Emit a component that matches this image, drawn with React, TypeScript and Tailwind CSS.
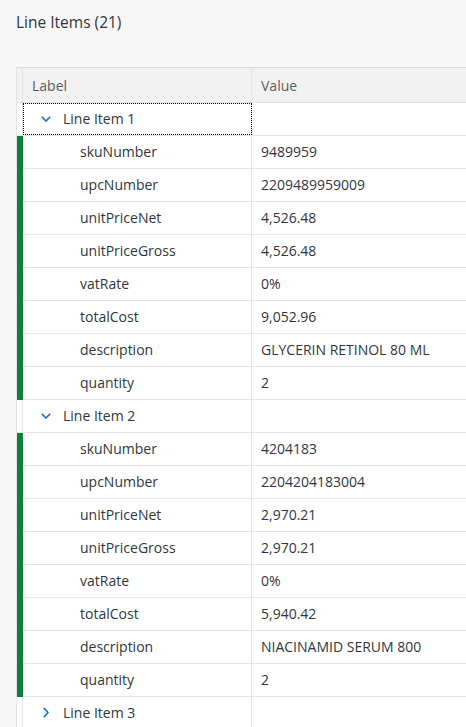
import React from "react";

type Row =
  | { kind: "group"; label: string; open: boolean; focus?: boolean }
  | { kind: "item"; label: string; value: string };

const rows: Row[] = [
  { kind: "group", label: "Line Item 1", open: true, focus: true },
  { kind: "item", label: "skuNumber", value: "9489959" },
  { kind: "item", label: "upcNumber", value: "2209489959009" },
  { kind: "item", label: "unitPriceNet", value: "4,526.48" },
  { kind: "item", label: "unitPriceGross", value: "4,526.48" },
  { kind: "item", label: "vatRate", value: "0%" },
  { kind: "item", label: "totalCost", value: "9,052.96" },
  { kind: "item", label: "description", value: "GLYCERIN RETINOL 80 ML" },
  { kind: "item", label: "quantity", value: "2" },
  { kind: "group", label: "Line Item 2", open: true },
  { kind: "item", label: "skuNumber", value: "4204183" },
  { kind: "item", label: "upcNumber", value: "2204204183004" },
  { kind: "item", label: "unitPriceNet", value: "2,970.21" },
  { kind: "item", label: "unitPriceGross", value: "2,970.21" },
  { kind: "item", label: "vatRate", value: "0%" },
  { kind: "item", label: "totalCost", value: "5,940.42" },
  { kind: "item", label: "description", value: "NIACINAMID SERUM 800" },
  { kind: "item", label: "quantity", value: "2" },
  { kind: "group", label: "Line Item 3", open: false },
];

function ChevronDown() {
  return (
    <svg width="10" height="6" viewBox="0 0 10 6" className="block">
      <path d="M0.8 0.8 L5 5 L9.2 0.8" fill="none" stroke="#0a6ed1" strokeWidth="1.6" />
    </svg>
  );
}

function ChevronRight() {
  return (
    <svg width="6" height="11" viewBox="0 0 6 11" className="block">
      <path d="M0.8 0.8 L5 5.5 L0.8 10.2" fill="none" stroke="#0a6ed1" strokeWidth="1.6" />
    </svg>
  );
}

export default function App() {
  return (
    <div
      className="w-[466px] h-[727px] overflow-hidden bg-[#f7f7f7] text-[#32363a]"
      style={{ fontFamily: '"Open Sans", "Noto Sans", sans-serif' }}
    >
      <div className="h-[67px] pl-4 pt-[10px]">
        <div className="text-[15.5px] leading-[24px]">Line Items (21)</div>
      </div>
      <div className="ml-4 w-[700px] bg-white border-t border-[#dcdcdc]">
        {/* header */}
        <div className="flex h-[35px] bg-[#f2f2f2] border-b border-[#e0e0e0]">
          <div className="w-[7px] border-l border-r border-[#e5e5e5]" />
          <div className="w-[229px] border-r border-[#e5e5e5] flex items-center pl-[9px] text-[14px] text-[#5b5e61]">
            Label
          </div>
          <div className="flex-1 flex items-center pl-[9px] text-[14px] text-[#5b5e61]">Value</div>
        </div>
        {rows.map((r, i) => (
          <div key={i} className="flex h-[33px] border-b border-[#e5e5e5] text-[14px]">
            {r.kind === "item" ? (
              <div className="w-[7px] border-l border-[#e5e5e5] bg-[#107e3e] -mb-px" />
            ) : (
              <div className="w-[7px] border-l border-r border-[#e5e5e5]" />
            )}
            <div
              className={
                "w-[229px] border-r border-[#e5e5e5] flex items-center pb-px " +
                (r.kind === "group" && r.focus ? "outline outline-1 outline-dotted outline-black -outline-offset-1 " : "") +
                (r.kind === "group" ? "pl-[18px]" : "pl-[57px]")
              }
            >
              {r.kind === "group" ? (
                <>
                  <span className="w-[22px] flex items-center">
                    {r.open ? <ChevronDown /> : <span className="pl-[2px]"><ChevronRight /></span>}
                  </span>
                  <span>{r.label}</span>
                </>
              ) : (
                <span>{r.label}</span>
              )}
            </div>
            <div className="flex-1 flex items-center pl-[9px] pb-px">{r.kind === "item" ? r.value : ""}</div>
          </div>
        ))}
      </div>
    </div>
  );
}
